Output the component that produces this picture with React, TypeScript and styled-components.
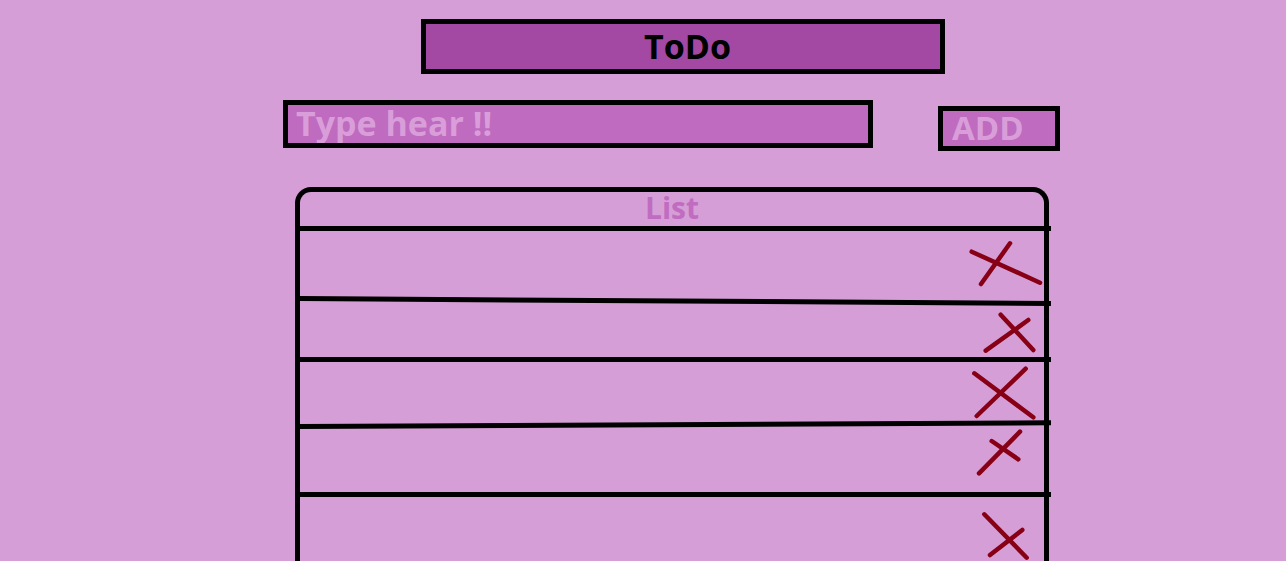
import React from 'react';
import styled, { createGlobalStyle } from 'styled-components';

const GlobalStyle = createGlobalStyle`
  html, body {
    margin: 0;
    padding: 0;
    background: #d69ed6;
    overflow: hidden;
  }
  body {
    font-family: 'Open Sans', 'Liberation Sans', sans-serif;
  }
  * {
    box-sizing: border-box;
  }
`;

const Page = styled.div`
  width: 1286px;
  height: 561px;
  padding-top: 19px;
  overflow: hidden;
`;

const TitleBar = styled.h1`
  margin: 0 0 0 421px;
  width: 524px;
  height: 55px;
  border: 5px solid #000;
  background: #a349a4;
  display: flex;
  align-items: center;
  justify-content: center;
  padding: 0 0 2px 9px;
  font-size: 34px;
  font-weight: 700;
  color: #000;
  line-height: 1;
`;

const FormRow = styled.form`
  margin: 26px 0 0 283px;
  display: flex;
  align-items: flex-start;
  gap: 65px;
`;

const TaskInput = styled.input`
  flex: none;
  width: 590px;
  height: 48px;
  border: 5px solid #000;
  border-radius: 0;
  background: #bf6bbf;
  padding: 0 0 3px 8px;
  font-family: inherit;
  font-size: 34px;
  font-weight: 700;
  color: #dc9fdc;
  outline: none;

  &::placeholder {
    color: #d99ed9;
    opacity: 1;
  }
`;

const AddButton = styled.button`
  flex: none;
  margin-top: 6px;
  width: 122px;
  height: 45px;
  border: 5px solid #000;
  border-radius: 0;
  background: #bf6bbf;
  padding: 0 0 2px 9px;
  text-align: left;
  font-family: inherit;
  font-size: 33px;
  font-weight: 700;
  line-height: 1;
  color: #d99ed9;
  cursor: pointer;
`;

const ListBox = styled.section`
  margin: 36px 0 0 295px;
  width: 754px;
  border: 5px solid #000;
  border-bottom: none;
  border-radius: 16px 16px 0 0;
  display: flex;
  flex-direction: column;
`;

const ListHeader = styled.h2`
  flex: none;
  margin: 0;
  height: 34px;
  display: flex;
  align-items: flex-end;
  justify-content: center;
  font-size: 30px;
  font-weight: 700;
  line-height: 1;
  color: #c06cc0;
  padding-bottom: 3px;
`;

const Divider = styled.div<{ $tilt?: number }>`
  flex: none;
  width: calc(100% + 7px);
  height: 5px;
  background: #000;
  transform-origin: left center;
  transform: rotate(${({ $tilt }) => $tilt ?? 0}deg);
`;

const Row = styled.div<{ $h: number }>`
  flex: none;
  height: ${({ $h }) => $h}px;
  display: flex;
  justify-content: flex-end;
`;

const Mark = styled.svg`
  flex: none;
  overflow: visible;
  cursor: pointer;
`;

type Stroke = [number, number, number, number];

const DeleteMark = ({ h, a, b }: { h: number; a: Stroke; b: Stroke }) => (
  <Mark width={80} height={h} viewBox={`0 0 80 ${h}`}>
    <g stroke="#880015" strokeWidth={4.5} strokeLinecap="round" fill="none">
      <line x1={a[0]} y1={a[1]} x2={a[2]} y2={a[3]} />
      <line x1={b[0]} y1={b[1]} x2={b[2]} y2={b[3]} />
    </g>
  </Mark>
);

const rows: { h: number; a: Stroke; b: Stroke; tilt: number }[] = [
  { h: 65, a: [7.7, 20.7, 76, 51.7], b: [46, 12.3, 17, 53], tilt: 0.38 },
  { h: 56, a: [36.7, 13.7, 69.3, 49], b: [64.3, 19, 21.7, 49.7], tilt: 0 },
  { h: 62, a: [10.3, 11.3, 69.3, 55.3], b: [61.7, 6.7, 12.7, 54], tilt: -0.28 },
  { h: 63, a: [27.7, 12, 54.3, 30.3], b: [56, 2.7, 15, 44.3], tilt: 0 },
  { h: 80, a: [20.3, 17.3, 62.7, 60.7], b: [58.3, 33, 26, 58], tilt: 0 },
];

export default function App() {
  return (
    <>
      <GlobalStyle />
      <Page>
        <TitleBar>ToDo</TitleBar>
        <FormRow onSubmit={(e) => e.preventDefault()}>
          <TaskInput placeholder="Type hear !!" />
          <AddButton type="submit">ADD</AddButton>
        </FormRow>
        <ListBox>
          <ListHeader>List</ListHeader>
          <Divider />
          {rows.map((r, i) => (
            <React.Fragment key={i}>
              <Row $h={r.h}>
                <DeleteMark h={r.h} a={r.a} b={r.b} />
              </Row>
              {i < rows.length - 1 && <Divider $tilt={r.tilt} />}
            </React.Fragment>
          ))}
        </ListBox>
      </Page>
    </>
  );
}
